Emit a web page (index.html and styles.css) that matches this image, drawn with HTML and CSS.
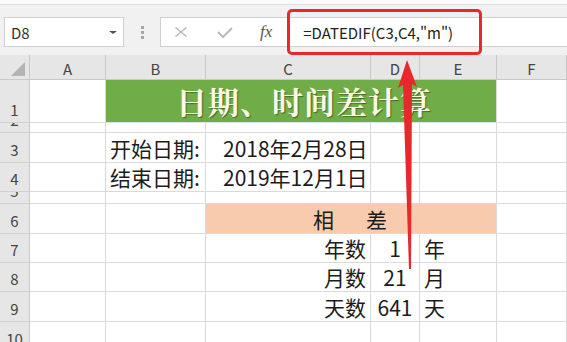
FILE: index.html
```html
<!DOCTYPE html>
<html lang="zh-CN">
<head>
    <meta charset="UTF-8">
    <link rel="stylesheet" href="styles.css">
</head>
<body>
    <div class="toolbar">
        <div class="top-strip"></div>
        <div class="formula-row">
            <div class="name-box">
                <span>D8</span>
                <span class="caret"></span>
            </div>
            <div class="grip"><i></i><i></i><i></i></div>
            <div class="formula-box">
                <svg class="btn-icon cancel" width="12" height="10" viewBox="0 0 12 10">
                    <path d="M0.5 0.5 L11.5 9.5 M11.5 0.5 L0.5 9.5" stroke="#b9b9b9" stroke-width="1.4" fill="none"/>
                </svg>
                <svg class="btn-icon" width="16" height="11" viewBox="0 0 16 11">
                    <path d="M1 5 L6 10 L15 1" stroke="#b9b9b9" stroke-width="2" fill="none"/>
                </svg>
                <span class="fx">fx</span>
                <span class="formula">=DATEDIF(C3,C4,"m")</span>
            </div>
        </div>
    </div>

    <div class="sheet">
        <!-- 열 머리글 -->
        <div class="hd corner"><span class="tri"></span></div>
        <div class="hd">A</div>
        <div class="hd">B</div>
        <div class="hd">C</div>
        <div class="hd">D</div>
        <div class="hd">E</div>
        <div class="hd">F</div>

        <div class="rh">1</div>
        <div class="c"></div>
        <div class="c title">日期、时间差计算</div>
        <div class="c"></div>

        <div class="rh">2</div>
        <div class="c"></div><div class="c"></div><div class="c"></div><div class="c"></div><div class="c"></div><div class="c"></div>

        <div class="rh">3</div>
        <div class="c"></div>
        <div class="c">开始日期:</div>
        <div class="c date">2018年2月28日</div>
        <div class="c"></div><div class="c"></div><div class="c"></div>

        <div class="rh">4</div>
        <div class="c"></div>
        <div class="c">结束日期:</div>
        <div class="c date">2019年12月1日</div>
        <div class="c"></div><div class="c"></div><div class="c"></div>

        <div class="rh">5</div>
        <div class="c"></div><div class="c"></div><div class="c"></div><div class="c"></div><div class="c"></div><div class="c"></div>

        <div class="rh">6</div>
        <div class="c"></div>
        <div class="c"></div>
        <div class="c diff"><span>相</span><span>差</span></div>
        <div class="c"></div>

        <div class="rh">7</div>
        <div class="c"></div><div class="c"></div>
        <div class="c right">年数</div>
        <div class="c mid">1</div>
        <div class="c">年</div>
        <div class="c"></div>

        <div class="rh">8</div>
        <div class="c"></div><div class="c"></div>
        <div class="c right">月数</div>
        <div class="c mid">21</div>
        <div class="c">月</div>
        <div class="c"></div>

        <div class="rh">9</div>
        <div class="c"></div><div class="c"></div>
        <div class="c right">天数</div>
        <div class="c mid">641</div>
        <div class="c">天</div>
        <div class="c"></div>

        <div class="rh">10</div>
        <div class="c"></div><div class="c"></div><div class="c"></div><div class="c"></div><div class="c"></div><div class="c"></div>
    </div>

    <!-- 빨간 표시 -->
    <div class="callout"></div>
    <svg class="arrow" width="567" height="342" viewBox="0 0 567 342">
        <polygon points="407,60 417,87 412,84 411,269 409,269 403,85 398,88" fill="#e8282b"/>
    </svg>
</body>
</html>
```

FILE: styles.css
```css
body {
    margin: 0;
    width: 567px;
    height: 342px;
    overflow: hidden;
    position: relative;
    font-family: "Noto Sans CJK SC", sans-serif;
    color: #1c1c1c;
    background: #fff;
}

.toolbar {
    height: 55px;
    background-color: #f1f1f1;
}

.top-strip {
    height: 4px;
    background-color: #fafafa;
    border-bottom: 1px solid #dedede;
}

.formula-row {
    display: flex;
    align-items: center;
    height: 30px;
    margin-top: 12px;
    padding-left: 4px;
}

.name-box {
    box-sizing: border-box;
    width: 120px;
    height: 30px;
    background: #fff;
    border: 1px solid #d0d0d0;
    display: flex;
    align-items: center;
    justify-content: space-between;
    padding: 0 6px 0 6px;
    font-size: 15px;
    color: #333;
}

.caret {
    width: 0;
    height: 0;
    border-left: 4px solid transparent;
    border-right: 4px solid transparent;
    border-top: 3px solid #555;
}

.grip {
    width: 36px;
    display: flex;
    flex-direction: column;
    align-items: center;
    gap: 2px;
}

.grip i {
    width: 3px;
    height: 3px;
    background: #a6a6a6;
}

.formula-box {
    box-sizing: border-box;
    flex: 1;
    height: 30px;
    background: #fff;
    border: 1px solid #d0d0d0;
    border-right: none;
    display: flex;
    align-items: center;
    padding-left: 14px;
}

.btn-icon {
    margin-right: 27px;
}

.cancel {
    margin-right: 30px;
}

.fx {
    font-family: "Liberation Serif", serif;
    font-style: italic;
    font-size: 17px;
    color: #555;
}

.formula {
    font-size: 15px;
    color: #222;
    margin-left: 31px;
}

.sheet {
    display: grid;
    grid-template-columns: 30px 76px 100px 165px 49px 77px 1fr;
    grid-template-rows: 25px 43px 10px 30px 29px 12px 30px 29px 29px 30px 30px;
}

.hd {
    box-sizing: border-box;
    background-color: #e6e6e6;
    border-right: 1px solid #c9c9c9;
    border-bottom: 1px solid #c9c9c9;
    display: flex;
    align-items: center;
    justify-content: center;
    padding-top: 2px;
    font-size: 15px;
    color: #444;
}

.corner {
    position: relative;
}

.tri {
    position: absolute;
    right: 4px;
    bottom: 3px;
    width: 0;
    height: 0;
    border-left: 14px solid transparent;
    border-bottom: 14px solid #b4b4b4;
}

.rh {
    box-sizing: border-box;
    background-color: #e6e6e6;
    border-right: 1px solid #c9c9c9;
    border-bottom: 1px solid #d0d0d0;
    display: flex;
    align-items: flex-end;
    justify-content: center;
    overflow: hidden;
    padding-bottom: 3px;
    font-size: 15px;
    line-height: 18px;
    color: #444;
}

.c {
    box-sizing: border-box;
    border-right: 1px solid #dadada;
    border-bottom: 1px solid #dadada;
    display: flex;
    align-items: flex-end;
    overflow: visible;
    white-space: nowrap;
    padding: 0 4px 2px 4px;
    font-size: 21px;
    line-height: 24px;
}

.title {
    grid-column: span 4;
    background-color: #70ad47;
    border-bottom: 1px solid #e0e0e0;
    align-items: center;
    justify-content: center;
    padding: 0 0 0 6px;
    font-family: "Noto Serif CJK SC", "Noto Sans CJK SC", serif;
    font-weight: bold;
    font-size: 31px;
    letter-spacing: 1px;
    color: #fbf8e4;
    text-shadow: 1px 1px 1px rgba(40, 60, 20, 0.6);
}

.date {
    padding-left: 17px;
}

.diff {
    grid-column: span 3;
    background-color: #f8cbad;
    justify-content: center;
    gap: 32px;
    padding-left: 2px;
}

.right {
    justify-content: flex-end;
}

.mid {
    justify-content: center;
    padding-left: 2px;
    padding-right: 2px;
}

.callout {
    position: absolute;
    left: 287px;
    top: 9px;
    width: 189px;
    height: 40px;
    border: 3px solid #e8282b;
    border-radius: 5px;
}

.arrow {
    position: absolute;
    left: 0;
    top: 0;
}
```
